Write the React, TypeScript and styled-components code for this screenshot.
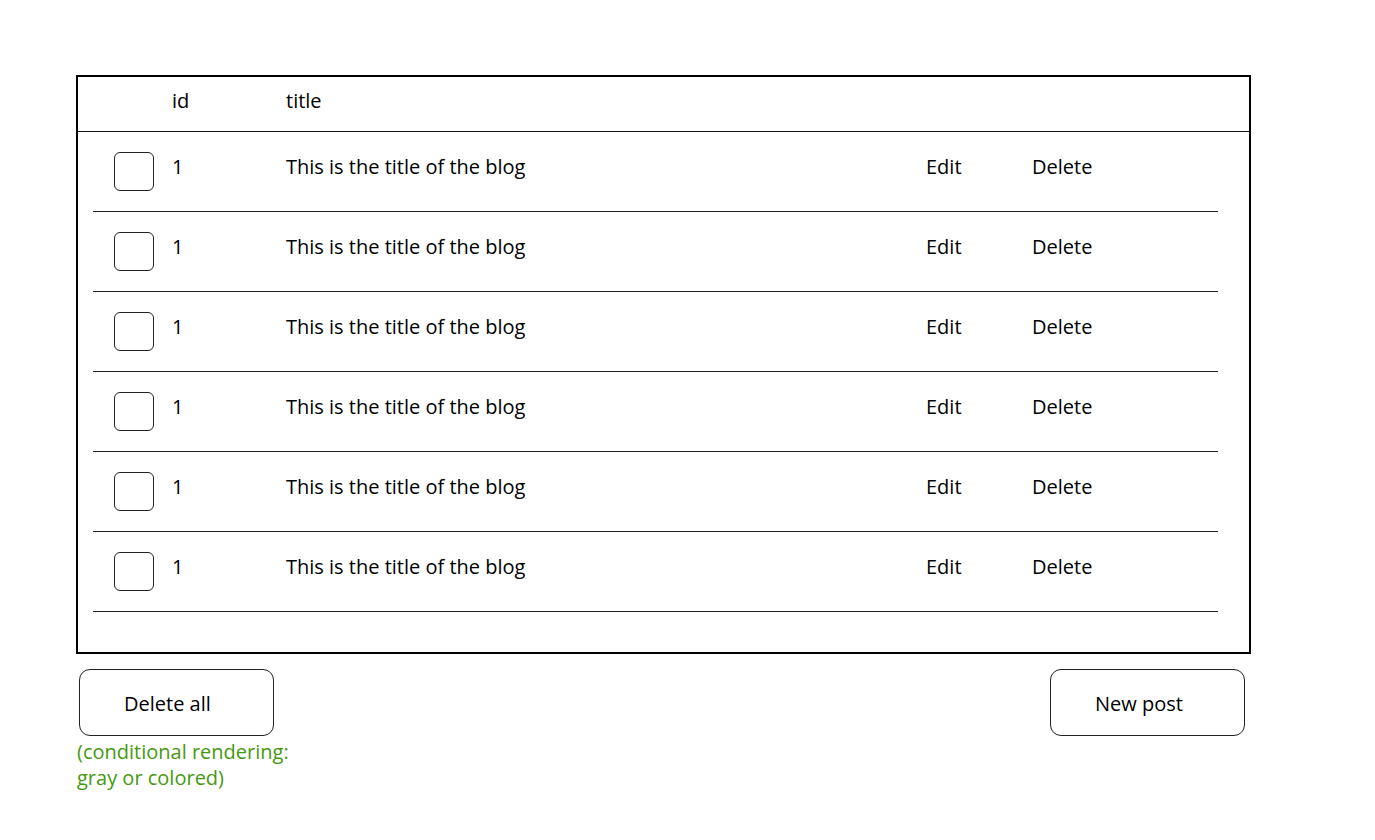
import React from "react";
import styled, { createGlobalStyle } from "styled-components";

const Global = createGlobalStyle`
  html, body { margin: 0; padding: 0; background: #fff; }
  body { font-family: "Open Sans", "Noto Sans", sans-serif; color: #000; }
`;

const Page = styled.div`
  padding: 75px 0 0 76px;
  width: 1175px;
`;

const TableBox = styled.div`
  border: 2px solid #000;
  box-sizing: border-box;
  width: 1175px;
`;

const cols = "58px 114px 640px 106px 1fr";

const HeaderRow = styled.div`
  display: grid;
  grid-template-columns: ${cols};
  align-items: center;
  padding-left: 36px;
  padding-bottom: 7px;
  height: 47px;
  border-bottom: 1px solid #111;
  font-size: 20px;
`;

const Rows = styled.div`
  padding: 0 31px 40px 15px;
`;

const Row = styled.div`
  display: grid;
  grid-template-columns: ${cols};
  align-items: center;
  height: 79px;
  padding-left: 21px;
  border-bottom: 1px solid #222;
  font-size: 20px;
`;

const Cell = styled.span`
  position: relative;
  top: -5px;
  white-space: nowrap;
`;

const Check = styled.div`
  width: 38px;
  height: 37px;
  border: 1px solid #222;
  border-radius: 6px;
`;

const Footer = styled.div`
  display: flex;
  justify-content: space-between;
  padding: 15px 6px 0 3px;
`;

const Btn = styled.button`
  width: 195px;
  height: 67px;
  border: 1px solid #222;
  border-radius: 11px;
  background: #fff;
  font-family: inherit;
  font-size: 20px;
  color: #000;
  text-align: left;
  padding: 2px 0 0 44px;
  box-sizing: border-box;
`;

const Note = styled.div`
  color: #45990f;
  font-size: 20px;
  line-height: 26px;
  margin: 3px 0 0 -2px;
`;

export default function App() {
  const rows = Array.from({ length: 6 });
  return (
    <>
      <Global />
      <Page>
        <TableBox>
          <HeaderRow>
            <span />
            <span>id</span>
            <span>title</span>
            <span />
            <span />
          </HeaderRow>
          <Rows>
            {rows.map((_, i) => (
              <Row key={i}>
                <Check />
                <Cell>1</Cell>
                <Cell>This is the title of the blog</Cell>
                <Cell>Edit</Cell>
                <Cell>Delete</Cell>
              </Row>
            ))}
          </Rows>
        </TableBox>
        <Footer>
          <div>
            <Btn>Delete all</Btn>
            <Note>
              (conditional rendering:
              <br />
              gray or colored)
            </Note>
          </div>
          <Btn>New post</Btn>
        </Footer>
      </Page>
    </>
  );
}
